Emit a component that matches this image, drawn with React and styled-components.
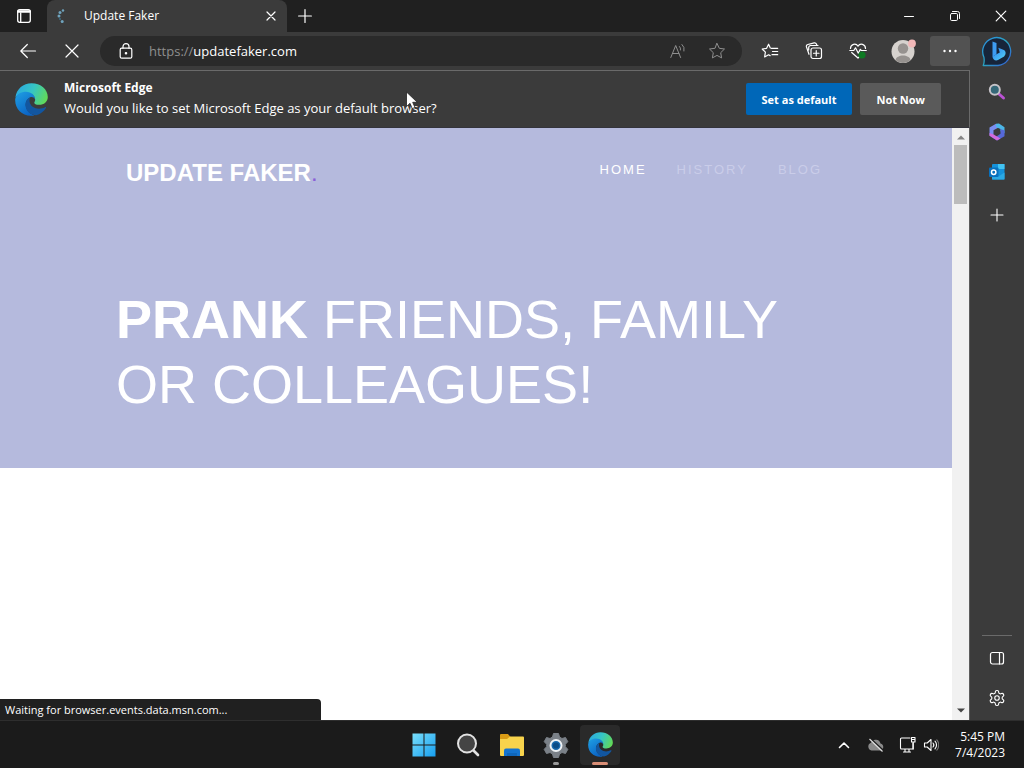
import React from 'react';
import styled, { createGlobalStyle } from 'styled-components';

const uiFont = "'Open Sans', 'Noto Sans', sans-serif";

function App() {
    return (
        <>
            <GlobalStyle />
            <Desktop>
                <Browser>
                    <TabStrip />
                    <BrowserBody>
                        <MainColumn>
                            <Toolbar />
                            <DefaultPrompt />
                            <PageArea />
                        </MainColumn>
                        <Sidebar />
                    </BrowserBody>
                </Browser>
                <Taskbar />
                <Cursor viewBox="0 0 14 20">
                    <path d="M1.5 1v14.6l3.5-3.3 2.3 5.3 2.7-1.1-2.3-5.2h4.6z" fill="#fff" stroke="#222" strokeWidth=".8" />
                </Cursor>
            </Desktop>
        </>
    );
}

function Icon({ size = 16, box = 16, weight = 1, children }) {
    return (
        <svg
            width={size}
            height={size}
            viewBox={`0 0 ${box} ${box}`}
            fill="none"
            stroke="currentColor"
            strokeWidth={weight}
            strokeLinecap="round"
            strokeLinejoin="round"
            aria-hidden="true"
        >
            {children}
        </svg>
    );
}

function EdgeLogo({ size, id }) {
    return (
        <svg width={size} height={size} viewBox="0 0 32 32" aria-hidden="true">
            <defs>
                <linearGradient id={`${id}-top`} x1="0" y1=".3" x2="1" y2=".6">
                    <stop offset="0" stopColor="#2aa9e0" />
                    <stop offset=".5" stopColor="#36c5c4" />
                    <stop offset="1" stopColor="#62d957" />
                </linearGradient>
                <linearGradient id={`${id}-left`} x1="0" y1="0" x2=".6" y2="1">
                    <stop offset="0" stopColor="#1fa0e4" />
                    <stop offset="1" stopColor="#0b63c4" />
                </linearGradient>
            </defs>
            <path d="M.4 14C1.5 5.5 8 .2 16 .2c9 0 15.800 6 15.800 13.300 0 4.700-3.800 7.600-8.300 7.600-3.300 0-4.800-1-4.800-2 0-.9 1.100-1.200.8-3.300 0-3-3.400-6.200-8.300-6.200C6.500 9.600 2.200 11.300.4 14z" fill={`url(#${id}-top)`} />
            <path d="M.2 15.500C1.200 10.500 6 8.400 10.600 8.400c5.400 0 8.900 3.600 8.900 7.300-1-1.800-3-2.600-4.700-1.800-3.600 1.700-5 5.200-4.200 9 .8 4 3.900 7.200 8.300 8.500C8.500 33.600.2 26 .2 17z" fill={`url(#${id}-left)`} />
            <path d="M14.800 13.900c-3.700 1.800-5.300 5.200-4.500 9.100.9 4.500 5 8.100 10.200 8.300 4-1 7.600-3.700 9.500-7 .4-.8-.2-1.200-.9-.8-6.500 3.300-14.400.5-15-5.800-.1-1.600.1-2.800.7-3.800z" fill="#1256a0" />
        </svg>
    );
}

function TabStrip() {
    return (
        <TabStripStyled>
            <TabActions aria-label="Tab actions">
                <Icon size={16} weight={1.3}>
                    <rect x="1.7" y="1.7" width="12.6" height="12.6" rx="2" />
                    <path d="M2.2 3.5h11.6" strokeWidth="2.4" />
                    <path d="M4.7 5v9" />
                </Icon>
            </TabActions>
            <Tab>
                <svg width="16" height="16" viewBox="0 0 16 16" aria-hidden="true">
                    <g fill="#6fa3bd">
                        <circle cx="8" cy="2.5" r="1.2" />
                        <circle cx="5" cy="4.5" r="1.5" />
                        <circle cx="4" cy="8" r="1.5" />
                        <circle cx="7.2" cy="13.5" r="1.5" />
                    </g>
                    <circle cx="5" cy="11" r="1.1" fill="#3d6b80" />
                </svg>
                <TabTitle>Update Faker</TabTitle>
                <TabButton aria-label="Close tab">
                    <Icon size={10} box={10} weight={1.2}><path d="M1 1l8 8M9 1L1 9" /></Icon>
                </TabButton>
            </Tab>
            <NewTab aria-label="New tab">
                <Icon size={14} box={14} weight={1.2}><path d="M7 .6v12.8M.6 7h12.8" /></Icon>
            </NewTab>
            <WindowButtons>
                <WindowButton aria-label="Minimize">
                    <Icon size={12} box={12}><path d="M1.5 6.5h9" /></Icon>
                </WindowButton>
                <WindowButton aria-label="Restore">
                    <Icon size={12} box={12}>
                        <rect x="1.5" y="3.5" width="7" height="7" rx="1.2" />
                        <path d="M3.5 1.5h5a2 2 0 0 1 2 2v5" />
                    </Icon>
                </WindowButton>
                <WindowButton aria-label="Close">
                    <Icon size={12} box={12} weight={1.2}><path d="M1.2 1.2l9.6 9.6M10.8 1.2l-9.6 9.6" /></Icon>
                </WindowButton>
            </WindowButtons>
        </TabStripStyled>
    );
}

function Toolbar() {
    return (
        <ToolbarStyled>
            <ToolButton aria-label="Back">
                <Icon size={18} box={18} weight={1.2}><path d="M16.5 9H1.8M8.3 2.5L1.8 9l6.5 6.5" /></Icon>
            </ToolButton>
            <ToolButton aria-label="Stop loading">
                <Icon size={14} box={14} weight={1.2}><path d="M1 1l12 12M13 1L1 13" /></Icon>
            </ToolButton>
            <AddressBar>
                <IconButton aria-label="Site information">
                    <Icon weight={1.2}>
                        <rect x="2.2" y="5.2" width="11.6" height="10" rx="1.5" />
                        <path d="M5 5.2V3.6a3 3 0 0 1 6 0v1.6" />
                        <circle cx="8" cy="10.2" r=".7" fill="currentColor" />
                    </Icon>
                </IconButton>
                <Address><span>https://</span>updatefaker.com</Address>
                <IconButton aria-label="Read aloud" $dim>
                    <Icon>
                        <path d="M.8 14.5L5.7 2.5l4.9 12M2.5 10.5h6.4M9.5 3.5a3.5 3.5 0 0 1 1 3.5M12 1.5a6.5 6.5 0 0 1 2 6.5" />
                    </Icon>
                </IconButton>
                <IconButton aria-label="Add to favorites" $dim>
                    <Icon size={18} box={18}>
                        <path d="M9 1.5l2.3 4.8 5.2.7-3.8 3.7.9 5.2L9 13.400l-4.600 2.500.9-5.200L1.500 7l5.200-.7z" />
                    </Icon>
                </IconButton>
            </AddressBar>
            <ToolGroup>
                <ToolButton aria-label="Favorites">
                    <Icon size={18} box={18} weight={1.2}>
                        <path d="M10.3 6.3h6.4M11.5 9.5h5.2M11 12.7h5.7M9.3 6L7.6 2.2 5.6 6.3 1.2 7l3.2 3.2-.8 4.8 4-2.2 1.5.8" />
                    </Icon>
                </ToolButton>
                <ToolButton aria-label="Collections">
                    <Icon size={18} box={18} weight={1.2}>
                        <rect x="6" y="6" width="10.5" height="10.5" rx="2" />
                        <path d="M11.25 8.500v5.500M8.500 11.250h5.500M4 12.300L1.500 5a2 2 0 0 1 1.300-2.500l6.400-1.600a2 2 0 0 1 2.200 1.100l.6 1.500M3.700 8V5.500a2 2 0 0 1 2-2H13" />
                    </Icon>
                </ToolButton>
                <ToolButton aria-label="Browser essentials">
                    <Icon size={18} box={18} weight={1.2}>
                        <path d="M1.5 6.5C1.5 2 7 .8 9 4.2 11 .8 16.5 2 16.5 6.5M2.7 10.5L9 16l3-2.7M.8 8.5h4l1.7-2.7 2.8 5.5 2-4 1 1.2h5" />
                        <circle cx="13" cy="13" r="3.6" fill="#0e7a23" stroke="none" />
                    </Icon>
                </ToolButton>
                <ToolButton aria-label="Profile">
                    <svg width="28" height="26" viewBox="-2 0 28 26" aria-hidden="true">
                        <circle cx="13" cy="13.5" r="11.5" fill="#d6d2ce" />
                        <circle cx="13" cy="10.5" r="5.2" fill="#96928f" />
                        <path d="M5.5 22c1-6 14-6 15 0-4 4-11 4-15 0z" fill="#96928f" />
                        <circle cx="22" cy="5.5" r="3.9" fill="#f2b8b8" />
                    </svg>
                </ToolButton>
                <MenuButton aria-label="Settings and more">
                    <Icon>
                        <g fill="currentColor" stroke="none">
                            <circle cx="2.5" cy="8" r="1.2" />
                            <circle cx="8" cy="8" r="1.2" />
                            <circle cx="13.5" cy="8" r="1.2" />
                        </g>
                    </Icon>
                </MenuButton>
            </ToolGroup>
        </ToolbarStyled>
    );
}

function DefaultPrompt() {
    return (
        <PromptStyled>
            <EdgeLogo size={33} id="prompt" />
            <PromptText>
                <strong>Microsoft Edge</strong>
                <p>Would you like to set Microsoft Edge as your default browser?</p>
            </PromptText>
            <PromptButton $primary>Set as default</PromptButton>
            <PromptButton>Not Now</PromptButton>
        </PromptStyled>
    );
}

function PageArea() {
    return (
        <PageAreaStyled>
            <Site>
                <Hero>
                    <SiteHeader>
                        <Brand href="#">UPDATE FAKER<span>.</span></Brand>
                        <Nav>
                            <NavLink href="#" $active>HOME</NavLink>
                            <NavLink href="#history">HISTORY</NavLink>
                            <NavLink href="#blog">BLOG</NavLink>
                        </Nav>
                    </SiteHeader>
                    <Headline>
                        <b>PRANK</b> FRIENDS, FAMILY<br />
                        OR COLLEAGUES!
                    </Headline>
                </Hero>
            </Site>
            <Scrollbar>
                <Arrow viewBox="0 0 8 5"><path d="M0 4.5L4 .5l4 4z" fill="#858585" /></Arrow>
                <Thumb />
                <Arrow viewBox="0 0 8 5"><path d="M0 .5h8l-4 4z" fill="#444" /></Arrow>
            </Scrollbar>
            <Status>Waiting for browser.events.data.msn.com...</Status>
        </PageAreaStyled>
    );
}

function Sidebar() {
    return (
        <SidebarStyled>
            <SideButton aria-label="Bing" $height={38}>
                <svg width="32" height="32" viewBox="0 0 32 32" aria-hidden="true">
                    <defs>
                        <linearGradient id="bing-ring" x1="0" y1="0" x2="1" y2="1">
                            <stop offset="0" stopColor="#2b8de0" />
                            <stop offset=".5" stopColor="#2aa3c0" />
                            <stop offset="1" stopColor="#3459d8" />
                        </linearGradient>
                        <linearGradient id="bing-b" x1="0" y1="0" x2="1" y2="1">
                            <stop offset="0" stopColor="#2c7df0" />
                            <stop offset="1" stopColor="#55d5f5" />
                        </linearGradient>
                    </defs>
                    <path d="M2.2 30.5c1.5-3 1-5.5.8-8A14 14 0 1 1 17 30.500z" fill="#17253a" stroke="url(#bing-ring)" strokeWidth="1.3" strokeLinejoin="round" />
                    <path d="M11.500 6.500l4 1.600v11.200l-4 2.500z" fill="#3d9cf2" />
                    <path d="M11.500 21.500l4-2.200 3.300-1.800-1.500-4.700 5.600 2.300c2.200 1 2.300 4.700.2 6.300l-6.100 3.600c-2.500 1.300-5.500-.5-5.500-3.500z" fill="url(#bing-b)" />
                </svg>
            </SideButton>
            <SideList>
                <SideButton aria-label="Search">
                    <svg width="18" height="18" viewBox="0 0 18 18" aria-hidden="true">
                        <path d="M11 11l4.500 4" stroke="#ba52d4" strokeWidth="3" strokeLinecap="round" />
                        <circle cx="6.8" cy="6.8" r="5" fill="#356878" stroke="#c5c2c7" strokeWidth="2" />
                    </svg>
                </SideButton>
                <SideButton aria-label="Microsoft 365">
                    <svg width="18" height="18" viewBox="0 0 18 18" aria-hidden="true">
                        <path d="M8 .8L1.500 4.500v8l4 2.200V7.200L11.500 4z" fill="#7a8df0" />
                        <path d="M8 .8l3-.2 5.500 3.600v6l-4-2V6L8 4z" fill="#4cb6e8" />
                        <path d="M16.500 7.500v5.700L9 17.500l-6.500-4 3-1.500 3 1.500 4-2.700V6z" fill="#5568d8" />
                        <path d="M1.500 10v2.800L9 17.500l3.500-2-7-4z" fill="#d26adb" />
                    </svg>
                </SideButton>
                <SideButton aria-label="Outlook">
                    <svg width="18" height="18" viewBox="0 0 18 18" aria-hidden="true">
                        <rect x="4" y="1" width="12.5" height="15.5" rx="1" fill="#1592db" />
                        <path d="M10 1h6.500v5H10z" fill="#42c3f2" />
                        <path d="M4 9.500l6.500 4 6-4v7H4z" fill="#2ba9e4" />
                        <rect x="1" y="4.500" width="9.500" height="9.500" rx="1" fill="#0870bd" />
                        <circle cx="5.700" cy="9.200" r="2.200" fill="none" stroke="#fff" strokeWidth="1.500" />
                    </svg>
                </SideButton>
                <SideButton aria-label="Customize" $height={46}>
                    <Icon size={14} box={14} weight={1.1}><path d="M7 1v12M1 7h12" /></Icon>
                </SideButton>
            </SideList>
            <SideFooter>
                <SideButton aria-label="Hide sidebar">
                    <Icon weight={1.2}>
                        <rect x="1.5" y="2.5" width="13" height="11.5" rx="2" />
                        <path d="M10.5 2.5V14" />
                    </Icon>
                </SideButton>
                <SideButton aria-label="Sidebar settings">
                    <Icon size={18} box={24} weight={1.5}>
                        <path d="M12.22 2h-.44a2 2 0 0 0-2 2v.18a2 2 0 0 1-1 1.73l-.43.25a2 2 0 0 1-2 0l-.15-.08a2 2 0 0 0-2.73.73l-.22.38a2 2 0 0 0 .73 2.73l.15.1a2 2 0 0 1 1 1.72v.51a2 2 0 0 1-1 1.74l-.15.09a2 2 0 0 0-.73 2.73l.22.38a2 2 0 0 0 2.73.73l.15-.08a2 2 0 0 1 2 0l.43.25a2 2 0 0 1 1 1.73V20a2 2 0 0 0 2 2h.44a2 2 0 0 0 2-2v-.18a2 2 0 0 1 1-1.73l.43-.25a2 2 0 0 1 2 0l.15.08a2 2 0 0 0 2.73-.73l.22-.39a2 2 0 0 0-.73-2.73l-.15-.08a2 2 0 0 1-1-1.74v-.5a2 2 0 0 1 1-1.74l.15-.09a2 2 0 0 0 .73-2.73l-.22-.38a2 2 0 0 0-2.73-.73l-.15.08a2 2 0 0 1-2 0l-.43-.25a2 2 0 0 1-1-1.73V4a2 2 0 0 0-2-2z" />
                        <circle cx="12" cy="12" r="3" />
                    </Icon>
                </SideButton>
            </SideFooter>
        </SidebarStyled>
    );
}

function Taskbar() {
    return (
        <TaskbarStyled>
            <Apps>
                <AppButton aria-label="Start">
                    <svg width="24" height="24" viewBox="0 0 24 24" aria-hidden="true">
                        <defs>
                            <linearGradient id="win" x1="0" y1="0" x2="24" y2="24" gradientUnits="userSpaceOnUse">
                                <stop offset="0" stopColor="#7be0fb" />
                                <stop offset="1" stopColor="#149df0" />
                            </linearGradient>
                        </defs>
                        <path d="M.5.5h11v11H.5zM12.5.5h11v11h-11zM.5 12.5h11v11H.5zM12.5 12.5h11v11h-11z" fill="url(#win)" />
                    </svg>
                </AppButton>
                <AppButton aria-label="Search">
                    <svg width="24" height="24" viewBox="0 0 24 24" aria-hidden="true">
                        <path d="M17.5 17.5l4.5 4.5" stroke="#e2e2e2" strokeWidth="2.6" strokeLinecap="round" />
                        <circle cx="11" cy="10.5" r="9" fill="#444" stroke="#e2e2e2" strokeWidth="2" />
                    </svg>
                </AppButton>
                <AppButton aria-label="File Explorer">
                    <svg width="26" height="24" viewBox="0 0 26 24" aria-hidden="true">
                        <path d="M1 2a1 1 0 0 1 1-1h7l2.5 3-3 4H1z" fill="#d99b15" />
                        <path d="M1 6h7l3-2.5h13a1 1 0 0 1 1 1V22a1 1 0 0 1-1 1H2a1 1 0 0 1-1-1z" fill="#f8d34c" />
                        <path d="M5 23v-5.5A2 2 0 0 1 7 15.5h12a2 2 0 0 1 2 2V23z" fill="#1473cf" />
                        <path d="M8 23v-3h10v3z" fill="#0f66ba" />
                    </svg>
                </AppButton>
                <AppButton aria-label="Settings">
                    <svg width="26" height="26" viewBox="0 0 26 26" aria-hidden="true">
                        <path d="M10.5 1.5h5l1 3.5 2.5 1.5 3.5-1 2.3 4.2-2.5 2.6v2.4l2.5 2.6-2.3 4.2-3.5-1L16.5 22l-1 3.500h-5l-1-3.500L7 20.500l-3.500 1-2.300-4.200 2.500-2.600v-2.400L1.200 9.700l2.300-4.200 3.500 1L9.500 5z" fill="#7b8188" stroke="#7b8188" strokeLinejoin="round" />
                        <circle cx="13" cy="13.5" r="5.5" fill="#1768ad" stroke="#eef2f5" strokeWidth="2" />
                        <circle cx="13" cy="13.5" r="3" fill="#0b4c87" />
                    </svg>
                    <Running />
                </AppButton>
                <AppButton aria-label="Microsoft Edge" $active>
                    <EdgeLogo size={25} id="task" />
                    <Running $active />
                </AppButton>
            </Apps>
            <Tray>
                <TrayButton aria-label="Show hidden icons" $width={18}>
                    <Icon size={14} box={14} weight={1.6}><path d="M2.5 9.5L7 5l4.5 4.5" /></Icon>
                </TrayButton>
                <TrayButton aria-label="OneDrive" $width={34}>
                    <svg width="18" height="16" viewBox="0 0 18 16" aria-hidden="true">
                        <path d="M4.5 13.5a4 4 0 0 1-.5-7.7 5 5 0 0 1 9.5.7 3.6 3.6 0 0 1 0 7z" fill="#8b8b8b" />
                        <path d="M3.5 1.5l13 12" stroke="#1b1b1b" strokeWidth="1.5" />
                        <path d="M2.5 2l13 12.5" stroke="#ddd" strokeWidth="1.2" />
                    </svg>
                </TrayButton>
                <TrayButton aria-label="Network" $width={18}>
                    <Icon size={18} box={18} weight={1.1}>
                        <path d="M11 2H2.5a1 1 0 0 0-1 1v9a1 1 0 0 0 1 1H14V7M6 13v3M10 13v3M4.5 16h7" />
                        <path d="M12.5 1.5h3.5v4.5h-3.5zM12.5 3.5h3.5M14.2 6v7" />
                    </Icon>
                </TrayButton>
                <TrayButton aria-label="Volume" $width={16}>
                    <Icon weight={1.1}>
                        <path d="M1.5 6h2.7L8 2.5v11L4.2 10H1.5zM10 6a3 3 0 0 1 0 4M12 4.2a5.5 5.5 0 0 1 0 7.6" />
                        <path d="M13.8 2.8a8 8 0 0 1 0 10.4" opacity=".4" />
                    </Icon>
                </TrayButton>
                <Clock>
                    <time>5:45 PM</time>
                    <time>7/4/2023</time>
                </Clock>
            </Tray>
        </TaskbarStyled>
    );
}

const GlobalStyle = createGlobalStyle`
    * {
        box-sizing: border-box;
        margin: 0;
        padding: 0;
    }

    body {
        background: #1b1b1b;
        font-family: ${uiFont};
    }

    button {
        font: inherit;
        color: inherit;
        background: none;
        border: none;
    }

    a {
        text-decoration: none;
    }

    svg {
        display: block;
        flex-shrink: 0;
    }
`;

const Desktop = styled.div`
    position: relative;
    display: flex;
    flex-direction: column;
    min-height: 100vh;
    color: #fff;
`;

const Browser = styled.div`
    flex: 1;
    display: flex;
    flex-direction: column;
`;

const BrowserBody = styled.div`
    flex: 1;
    display: flex;
    background: #3b3b3b;
`;

const MainColumn = styled.div`
    flex: 1;
    min-width: 0;
    display: flex;
    flex-direction: column;
`;

const Cursor = styled.svg`
    position: absolute;
    left: 405px;
    top: 91px;
    width: 14px;
    height: 20px;
    pointer-events: none;
`;

const TabStripStyled = styled.header`
    display: flex;
    height: 32px;
    background: #202020;
`;

const TabActions = styled.button`
    display: flex;
    align-items: center;
    justify-content: center;
    width: 47px;
`;

const Tab = styled.div`
    display: flex;
    align-items: center;
    gap: 13px;
    width: 240px;
    padding: 0 8px;
    border-radius: 8px 8px 0 0;
    background: #3b3b3b;
`;

const TabTitle = styled.span`
    flex: 1;
    font-size: 12px;
    line-height: 16px;
`;

const TabButton = styled.button`
    display: flex;
    padding: 3px;
`;

const NewTab = styled.button`
    display: flex;
    align-items: center;
    justify-content: center;
    width: 36px;
`;

const WindowButtons = styled.div`
    display: flex;
    margin-left: auto;
`;

const WindowButton = styled.button`
    display: flex;
    align-items: center;
    justify-content: center;
    width: 46px;
`;

const ToolbarStyled = styled.div`
    display: flex;
    align-items: center;
    height: 38px;
    padding-left: 6px;
`;

const ToolButton = styled.button`
    display: flex;
    align-items: center;
    justify-content: center;
    width: 44px;
    height: 30px;
`;

const AddressBar = styled.div`
    flex: 1;
    display: flex;
    align-items: center;
    height: 30px;
    margin-left: 6px;
    padding: 0 16px 0 18px;
    border-radius: 15px;
    background: #2a2a2a;
`;

const IconButton = styled.button`
    display: flex;
    color: ${({ $dim }) => ($dim ? '#8f8f8f' : '#fff')};

    & + & {
        margin-left: 22px;
    }
`;

const Address = styled.div`
    flex: 1;
    margin-left: 15px;
    font-size: 13px;
    line-height: 20px;

    span {
        color: #8f8f8f;
    }
`;

const ToolGroup = styled.div`
    display: flex;
    margin-left: 6px;
`;

const MenuButton = styled(ToolButton)`
    width: 40px;
    margin-left: 6px;
    border-radius: 3px;
    background: #525252;
`;

const PromptStyled = styled.section`
    display: flex;
    align-items: center;
    gap: 8px;
    height: 58px;
    padding: 0 28px 0 15px;
    border: solid #6a6a6a;
    border-width: 1px 1px 0 0;
    border-bottom: 1px solid #34343c;
`;

const PromptText = styled.div`
    flex: 1;
    margin-left: 8px;
    padding-bottom: 2px;
    font-size: 13px;
    line-height: 20px;

    strong {
        display: block;
        font-size: 12px;
    }
`;

const PromptButton = styled.button`
    height: 32px;
    padding: 0 16px;
    border-radius: 2px;
    background: ${({ $primary }) => ($primary ? '#0067b8' : '#5a5a5a')};
    font-size: 11px;
    font-weight: 700;
`;

const PageAreaStyled = styled.div`
    position: relative;
    flex: 1;
    display: flex;
    border-right: 1px solid #5c5c5c;
    background: #fff;
`;

const Site = styled.main`
    flex: 1;
    font-family: 'Liberation Sans', Arial, sans-serif;
`;

const Hero = styled.section`
    padding: 30px 116px 51px;
    background: #b5badd;
`;

const SiteHeader = styled.div`
    display: flex;
    align-items: flex-start;
    padding: 0 14px 0 10px;
`;

const Brand = styled.a`
    color: #fff;
    font-size: 24px;
    font-weight: 700;
    line-height: 30px;

    span {
        color: #8a5fd8;
        font-weight: 400;
    }
`;

const Nav = styled.nav`
    display: flex;
    gap: 30px;
    margin-left: auto;
`;

const NavLink = styled.a`
    color: ${({ $active }) => ($active ? '#fff' : '#cacde9')};
    font-size: 13px;
    line-height: 24px;
    letter-spacing: 2px;
`;

const Headline = styled.h1`
    margin-top: 99px;
    font-size: 54px;
    font-weight: 400;
    line-height: 65px;
`;

const Scrollbar = styled.div`
    display: flex;
    flex-direction: column;
    align-items: center;
    width: 17px;
    padding: 7px 0;
    background: #f1f1f1;
`;

const Arrow = styled.svg`
    width: 8px;
    height: 5px;
`;

const Thumb = styled.div`
    width: 13px;
    height: 59px;
    margin: 5px 0 auto;
    background: #bcbcbc;
`;

const Status = styled.div`
    position: absolute;
    left: 0;
    bottom: 0;
    width: 321px;
    padding: 2px 5px 1px;
    border-radius: 0 4px 0 0;
    background: #202020;
    font-size: 11px;
    line-height: 18px;
`;

const SidebarStyled = styled.aside`
    display: flex;
    flex-direction: column;
    width: 54px;
`;

const SideList = styled.div`
    padding-top: 2px;
`;

const SideButton = styled.button`
    display: flex;
    align-items: center;
    justify-content: center;
    width: 100%;
    height: ${({ $height = 40 }) => $height}px;
`;

const SideFooter = styled.div`
    margin: auto 12px 2px;
    padding-top: 2px;
    border-top: 1px solid #6a6a6a;
`;

const TaskbarStyled = styled.footer`
    display: grid;
    grid-template-columns: 1fr auto 1fr;
    height: 48px;
    border-top: 1px solid #2e2e2e;
    background: #1b1b1b;
`;

const Apps = styled.div`
    grid-column: 2;
    display: flex;
    align-items: center;
    gap: 4px;
`;

const AppButton = styled.button`
    position: relative;
    display: flex;
    align-items: center;
    justify-content: center;
    width: 40px;
    height: 40px;
    border-radius: 4px;
    background: ${({ $active }) => ($active ? '#2a2a2a' : 'none')};
`;

const Running = styled.span`
    position: absolute;
    left: 50%;
    bottom: 0;
    width: ${({ $active }) => ($active ? 16 : 6)}px;
    height: 3px;
    border-radius: 2px;
    background: ${({ $active }) => ($active ? '#d98e76' : '#9a9a9a')};
    transform: translateX(-50%);
`;

const Tray = styled.div`
    display: flex;
    align-items: center;
    justify-content: flex-end;
    gap: 6px;
    padding-right: 19px;
`;

const TrayButton = styled.button`
    display: flex;
    justify-content: center;
    width: ${({ $width }) => $width}px;
`;

const Clock = styled.div`
    display: flex;
    flex-direction: column;
    margin-left: 10px;
    font-size: 12px;
    line-height: 16px;
    text-align: right;
`;

export default App;
